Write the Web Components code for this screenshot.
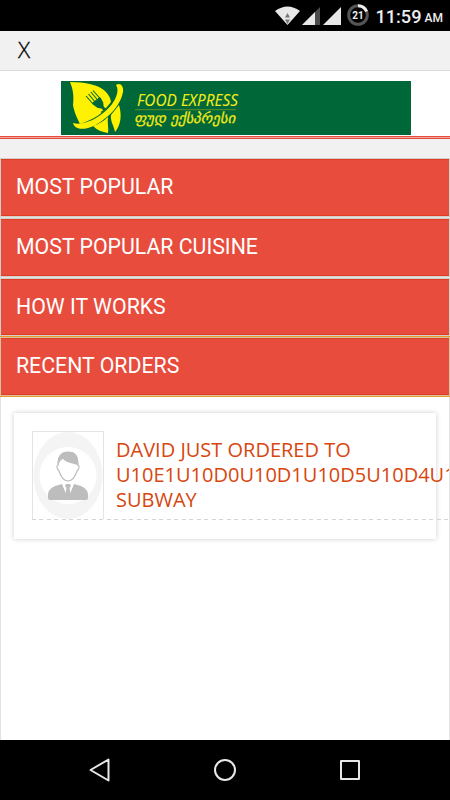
<!DOCTYPE html>
<html lang="en">
<head>
<meta charset="utf-8">
<title>Food Express</title>
<style>
  html, body {
    margin: 0;
    width: 450px;
    height: 800px;
    overflow: hidden;
    background: #fff;
    font-family: Roboto, sans-serif;
  }
</style>
</head>
<body>
<food-app></food-app>
<script>
class StatusBar extends HTMLElement {
  connectedCallback() {
    this.attachShadow({ mode: "open" }).innerHTML = `
      <style>
        :host {
          display: flex;
          justify-content: flex-end;
          align-items: center;
          height: 31px;
          box-sizing: border-box;
          padding-right: 7px;
          background: #000;
          color: #eee;
        }
        svg {
          display: block;
          margin-right: 4px;
        }
        .time {
          font-size: 18.2px;
          font-weight: 500;
          line-height: 31px;
          padding-top: 2px;
          white-space: nowrap;
        }
        .half {
          font-size: 12px;
          font-weight: 500;
          line-height: 31px;
          padding-top: 6px;
          margin-left: 3px;
          white-space: nowrap;
        }
      </style>
      <svg width="96" height="31" viewBox="0 0 96 31">
        <path d="M0 11Q12.500 2 25 11L12.500 25Z" fill="#e8e8e8"/>
        <path d="M10 17.500L12.500 13L15 17.500ZM10 19.500H15L12.500 24Z" fill="#777"/>
        <path d="M27 25L45 7V25Z" fill="#4b4b4b"/>
        <path d="M27 25L40 12V25Z" fill="#e8e8e8"/>
        <path d="M48 25L66 7V25Z" fill="#e8e8e8"/>
        <circle cx="83" cy="15" r="9.300" fill="none" stroke="#555" stroke-width="3"/>
        <path d="M83 5.700A9.300 9.300 0 0 1 91.600 11.500" fill="none" stroke="#eee" stroke-width="3"/>
        <text x="83" y="18.800" text-anchor="middle" fill="#eee" font-size="10" font-weight="700">21</text>
      </svg>
      <span class="time">11:59</span><span class="half">AM</span>
    `;
  }
}

class BrandLogo extends HTMLElement {
  connectedCallback() {
    this.attachShadow({ mode: "open" }).innerHTML = `
      <style>
        :host {
          display: block;
          width: 350px;
          height: 54px;
          background: #006838;
        }
        svg {
          display: block;
        }
      </style>
      <svg width="350" height="54" viewBox="0 0 350 54">
        <path d="M9 1C24 1 38 4 44 10C48 14 50 18 50 22C44 31 32 39 19 43C17 39 13 31 12 24C13 15 12 8 9 1Z" fill="#fff200"/>
        <path d="M12 42C26 46 49 31 55 16C57 11 57 7 55 4C59 1 63 5 62 11C60 22 52 32 42 39C31 48 15 52 12 42Z" fill="#fff200"/>
        <path d="M32 45C38 43 43 40 47 36C46 42 48 47 47 52C41 51 36 49 32 45ZM50 34L58 24C61 34 60 44 54 51C53 45 49 40 50 34Z" fill="#fff200"/>
        <g fill="none" stroke="#006838">
          <path d="M25 15L33 24M27.500 13L35 22M29.800 11L37.500 20M32 9.500L39.500 18" stroke-width="1.100"/>
          <path d="M31.500 22Q37 29 42 26Q43 22 39 16.500Z" fill="#006838"/>
          <path d="M38 23L44 29" stroke-width="3"/>
          <path d="M40 31.500Q47 27 52 19" stroke-width="1.200"/>
        </g>
        <text x="76" y="24.500" fill="#f5eb15" font-family="Noto Sans" font-size="15.600" font-style="italic" textLength="101" lengthAdjust="spacingAndGlyphs">FOOD EXPRESS</text>
        <path d="M74 28.700H175" stroke="#759b1e" stroke-width=".8"/>
        <text transform="translate(73 42) skewX(-12)" fill="#f5eb15" stroke="#f5eb15" stroke-width=".25" font-family="DejaVu Sans" font-size="14" textLength="101" lengthAdjust="spacingAndGlyphs">ფუდ ექსპრესი</text>
      </svg>
    `;
  }
}

class MenuRow extends HTMLElement {
  connectedCallback() {
    this.attachShadow({ mode: "open" }).innerHTML = `
      <style>
        :host {
          display: block;
          box-sizing: border-box;
          height: 59px;
          margin: 0 0 1px;
          padding-left: 15px;
          border: 1px solid #d3cfcb;
          background: #e84c3d;
          box-shadow: inset 0 1px #e03c24, inset 0 -1px #e03c24;
          color: #fff;
          font-size: 21.3px;
          line-height: 55px;
          white-space: nowrap;
        }
        :host([short]) {
          height: 58px;
        }
        :host([active]) {
          position: relative;
          margin: 0;
          border-color: #dcc3a0;
          outline: 1px solid #e59a2e;
        }
      </style>
      <slot></slot>
    `;
  }
}

class UserAvatar extends HTMLElement {
  connectedCallback() {
    this.attachShadow({ mode: "open" }).innerHTML = `
      <style>
        :host {
          display: block;
          flex: none;
          box-sizing: border-box;
          width: 72px;
          height: 88px;
          border: 1px solid #e4e4e4;
          border-bottom: 0;
        }
        svg {
          display: block;
        }
      </style>
      <svg width="70" height="87" viewBox="0 0 70 87">
        <ellipse cx="35" cy="43.500" rx="34.500" ry="43.500" fill="#f4f4f4"/>
        <ellipse cx="35" cy="43.500" rx="28.500" ry="28.500" fill="#fff"/>
        <path d="M25 33C25 24 28 21 35 21C42 21 45 24 45 33C47 34 46 37 44 39C42 45 39 49 35 49C31 49 28 45 26 39C24 37 23 34 25 33Z" fill="#fff" stroke="#bdbdbd" stroke-width="1.200"/>
        <path d="M25 34C24 24 28 19.500 35 19.500C43 19.500 46 24 45 34C43 31 34 32 30 27C27 28 26 31 25 34Z" fill="#bdbdbd"/>
        <path d="M15 66Q14 57 22 54L29 52L35 66L41 52L48 54Q56 57 55 66Q55 68 53 68H17Q15 68 15 66Z" fill="#bdbdbd"/>
        <path d="M29 51L35 67L41 51L36 54H34Z" fill="#fff"/>
        <path d="M33 52H37L38 54L36.500 56L38 64L35 67L32 64L33.500 56L32 54Z" fill="#bdbdbd"/>
      </svg>
    `;
  }
}

class OrderCard extends HTMLElement {
  connectedCallback() {
    this.attachShadow({ mode: "open" }).innerHTML = `
      <style>
        :host {
          display: block;
          box-sizing: border-box;
          width: 422px;
          height: 126px;
          padding: 18px 0 0 18px;
          background: #fff;
          box-shadow: 0 0 5px rgba(0, 0, 0, .2);
        }
        .order {
          display: flex;
          width: 480px;
          gap: 12px;
        }
        .text {
          padding-top: 6px;
          color: #d8460f;
          font: 400 20px/25px "Open Sans", sans-serif;
          white-space: nowrap;
        }
        .line {
          width: 480px;
          height: 1px;
          background: repeating-linear-gradient(90deg, #d5d5d5 0 4px, transparent 4px 7.5px);
        }
      </style>
      <div class="order">
        <user-avatar></user-avatar>
        <div class="text"><slot></slot></div>
      </div>
      <div class="line"></div>
    `;
  }
}

class NavBar extends HTMLElement {
  connectedCallback() {
    this.attachShadow({ mode: "open" }).innerHTML = `
      <style>
        :host {
          display: flex;
          justify-content: center;
          align-items: center;
          gap: 101px;
          height: 60px;
          background: #000;
        }
        svg {
          fill: none;
          stroke: #e8e8e8;
          stroke-width: 2;
          stroke-linejoin: round;
        }
      </style>
      <svg width="24" height="24"><path d="M2.500 12L20.500 1.500V22.500Z"/></svg>
      <svg width="24" height="24"><circle cx="12" cy="12" r="10"/></svg>
      <svg width="24" height="24"><rect x="3" y="3" width="18" height="18"/></svg>
    `;
  }
}

class FoodApp extends HTMLElement {
  connectedCallback() {
    this.attachShadow({ mode: "open" }).innerHTML = `
      <style>
        :host {
          display: flex;
          flex-direction: column;
          width: 450px;
          height: 800px;
          overflow: hidden;
        }
        .title {
          height: 40px;
          box-sizing: border-box;
          padding-left: 18px;
          border-bottom: 1px solid #ddd;
          background: #f1f1f1;
          color: #000;
          font: 300 22.500px/37px "Open Sans", sans-serif;
          -webkit-text-stroke: .3px #000;
        }
        header {
          display: flex;
          height: 65px;
          box-sizing: border-box;
          padding: 10px 0 0 61px;
          background: #fff;
        }
        .rule {
          height: 1px;
          background: #f3a49c;
          border: solid #e84c3d;
          border-width: 1px 0;
        }
        .menu {
          padding-top: 19px;
          background: #f1f1f1;
        }
        .rows {
          display: flow-root;
          background: #e2e2e2;
        }
        .orders {
          flex: 1;
          min-height: 0;
          overflow: hidden;
          border: 1px solid #e3e3e3;
          border-width: 0 1px;
          padding: 17px 0 0 13px;
          background: #fff;
        }
      </style>
      <status-bar></status-bar>
      <div class="title">X</div>
      <header><brand-logo></brand-logo></header>
      <div class="rule"></div>
      <div class="menu">
        <div class="rows">
          <menu-row>MOST POPULAR</menu-row>
          <menu-row>MOST POPULAR CUISINE</menu-row>
          <menu-row short>HOW IT WORKS</menu-row>
          <menu-row active>RECENT ORDERS</menu-row>
        </div>
      </div>
      <div class="orders">
        <order-card>DAVID JUST ORDERED TO<br>U10E1U10D0U10D1U10D5U10D4U10D<br>SUBWAY</order-card>
      </div>
      <nav-bar></nav-bar>
    `;
  }
}

customElements.define('status-bar', StatusBar);
customElements.define('brand-logo', BrandLogo);
customElements.define('menu-row', MenuRow);
customElements.define('user-avatar', UserAvatar);
customElements.define('order-card', OrderCard);
customElements.define('nav-bar', NavBar);
customElements.define('food-app', FoodApp);
</script>
</body>
</html>
